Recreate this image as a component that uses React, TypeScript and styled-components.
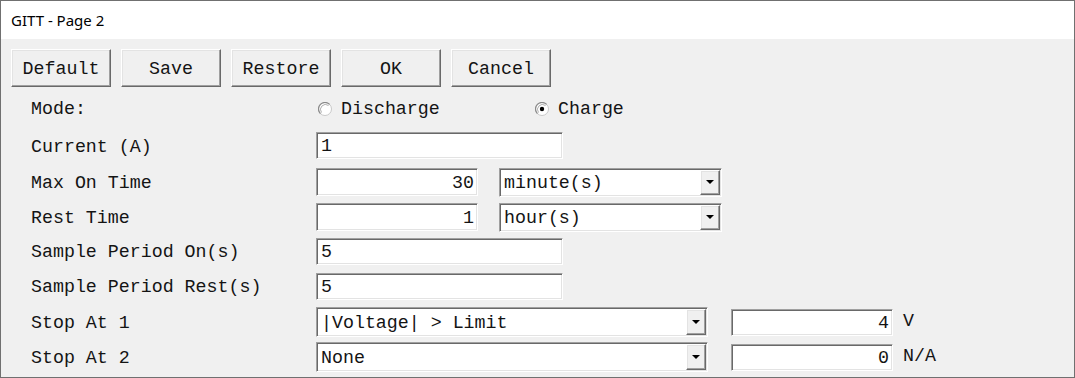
import React from "react";
import styled, { createGlobalStyle } from "styled-components";

const GlobalStyle = createGlobalStyle`
  html, body { margin: 0; padding: 0; background: #ffffff; }
  body { font-family: "Liberation Mono", "Courier New", monospace; }
`;

const mono = `"Liberation Mono", "Courier New", monospace`;

const Window = styled.div`
  width: 1075px;
  height: 378px;
  box-sizing: border-box;
  border: 1px solid #707070;
  display: flex;
  flex-direction: column;
  background: #f0f0f0;
  overflow: hidden;
`;

const TitleBar = styled.div`
  flex: none;
  height: 38px;
  background: #ffffff;
  display: flex;
  align-items: center;
  padding-left: 10px;
  font-family: "Noto Sans", "Liberation Sans", sans-serif;
  font-size: 15px;
  color: #000000;
`;

const Toolbar = styled.div`
  display: flex;
  gap: 10px;
  padding: 10px 0 0 10px;
`;

const Button = styled.button`
  width: 100px;
  height: 38px;
  box-sizing: border-box;
  padding: 2px 0 0 0;
  margin: 0;
  background: #f0f0f0;
  border: 1px solid;
  border-color: #ffffff #696969 #696969 #ffffff;
  box-shadow: inset -1px -1px #a0a0a0, inset 1px 1px #e3e3e3;
  font-family: ${mono};
  font-size: 18.3px;
  color: #141414;
  cursor: default;
`;

const Form = styled.div`
  display: grid;
  grid-template-columns: 285px 1fr;
  grid-template-rows: 38px 37px 36px 34px 34px 36px 36px 34px;
  align-items: center;
  padding: 2px 0 0 30px;
`;

const Label = styled.div`
  font-family: ${mono};
  font-size: 18.3px;
  color: #141414;
  white-space: pre;
  padding-top: 2px;
`;

const Controls = styled.div`
  display: flex;
  align-items: center;
`;

const Field = styled.div<{ $w: number; $h: number; $right?: boolean }>`
  width: ${(p) => p.$w}px;
  height: ${(p) => p.$h}px;
  box-sizing: border-box;
  background: #ffffff;
  border: 1px solid;
  border-color: #a0a0a0 #ffffff #ffffff #a0a0a0;
  box-shadow: inset 1px 1px #696969, inset -1px -1px #e3e3e3;
  display: flex;
  align-items: center;
  justify-content: ${(p) => (p.$right ? "flex-end" : "flex-start")};
  padding: ${(p) => (p.$right ? "1px 3px 0 0" : "1px 0 0 4px")};
  font-family: ${mono};
  font-size: 18.3px;
  color: #141414;
  white-space: pre;
`;

const Select = styled.div<{ $w: number; $h: number }>`
  width: ${(p) => p.$w}px;
  height: ${(p) => p.$h}px;
  box-sizing: border-box;
  background: #ffffff;
  border: 1px solid;
  border-color: #a0a0a0 #ffffff #ffffff #a0a0a0;
  box-shadow: inset 1px 1px #696969, inset -1px -1px #e3e3e3;
  padding: 1px;
  display: flex;
  align-items: stretch;
`;

const SelectText = styled.div`
  flex: 1;
  display: flex;
  align-items: center;
  padding: 1px 0 0 3px;
  font-family: ${mono};
  font-size: 18.3px;
  color: #141414;
  white-space: pre;
`;

const DropButton = styled.div`
  width: 20px;
  box-sizing: border-box;
  background: #f0f0f0;
  border: 1px solid;
  border-color: #ffffff #696969 #696969 #ffffff;
  box-shadow: inset -1px -1px #a0a0a0, inset 1px 1px #e3e3e3;
  display: flex;
  align-items: center;
  justify-content: center;
`;

const Spacer = styled.div<{ $w: number }>`
  width: ${(p) => p.$w}px;
  flex: none;
`;

const Unit = styled.div`
  margin-left: 10px;
  font-family: ${mono};
  font-size: 18.3px;
  color: #141414;
  white-space: pre;
  padding-bottom: 2px;
`;

const RadioOption = styled.div<{ $w?: number }>`
  display: flex;
  align-items: center;
  gap: 9px;
  width: ${(p) => (p.$w ? `${p.$w}px` : "auto")};
  font-family: ${mono};
  font-size: 18.3px;
  color: #141414;
`;

const RadioGroup = styled.div`
  display: flex;
  align-items: center;
  padding: 2px 0 0 2px;
`;

const RadioIcon = ({ checked }: { checked?: boolean }) => (
  <svg width="14" height="14" viewBox="0 0 14 14">
    <circle cx="7" cy="7" r="6.5" fill="#ffffff" stroke="#c8c8c8" strokeWidth="1" />
    <path d="M2.4 11.6 A6.5 6.5 0 0 1 11.6 2.4" fill="none" stroke="#8a8a8a" strokeWidth="1.2" />
    <path d="M3.5 10.5 A5 5 0 0 1 10.5 3.5" fill="none" stroke="#b0b0b0" strokeWidth="1" />
    {checked && <circle cx="7" cy="7" r="2.2" fill="#000000" />}
  </svg>
);

const Arrow = () => (
  <svg width="8" height="4" viewBox="0 0 8 4">
    <path d="M0 0 H8 L4 4 Z" fill="#000000" />
  </svg>
);

const Dropdown = ({ w, h, text }: { w: number; h: number; text: string }) => (
  <Select $w={w} $h={h}>
    <SelectText>{text}</SelectText>
    <DropButton>
      <Arrow />
    </DropButton>
  </Select>
);

export default function App() {
  return (
    <>
      <GlobalStyle />
      <Window>
        <TitleBar>GITT - Page 2</TitleBar>
        <Toolbar>
          <Button>Default</Button>
          <Button>Save</Button>
          <Button>Restore</Button>
          <Button>OK</Button>
          <Button>Cancel</Button>
        </Toolbar>
        <Form>
          <Label>Mode:</Label>
          <RadioGroup>
            <RadioOption $w={217}>
              <RadioIcon />
              Discharge
            </RadioOption>
            <RadioOption>
              <RadioIcon checked />
              Charge
            </RadioOption>
          </RadioGroup>

          <Label>Current (A)</Label>
          <Controls>
            <Field $w={247} $h={27}>1</Field>
          </Controls>

          <Label>Max On Time</Label>
          <Controls>
            <Field $w={162} $h={28} $right>30</Field>
            <Spacer $w={21} />
            <Dropdown w={223} h={29} text="minute(s)" />
          </Controls>

          <Label>Rest Time</Label>
          <Controls>
            <Field $w={162} $h={28} $right>1</Field>
            <Spacer $w={21} />
            <Dropdown w={223} h={29} text="hour(s)" />
          </Controls>

          <Label>Sample Period On(s)</Label>
          <Controls>
            <Field $w={247} $h={27}>5</Field>
          </Controls>

          <Label>Sample Period Rest(s)</Label>
          <Controls>
            <Field $w={247} $h={27}>5</Field>
          </Controls>

          <Label>Stop At 1</Label>
          <Controls>
            <Dropdown w={392} h={30} text="|Voltage| > Limit" />
            <Spacer $w={23} />
            <Field $w={162} $h={27} $right>4</Field>
            <Unit>V</Unit>
          </Controls>

          <Label>Stop At 2</Label>
          <Controls>
            <Dropdown w={392} h={30} text="None" />
            <Spacer $w={23} />
            <Field $w={162} $h={27} $right>0</Field>
            <Unit>N/A</Unit>
          </Controls>
        </Form>
      </Window>
    </>
  );
}
